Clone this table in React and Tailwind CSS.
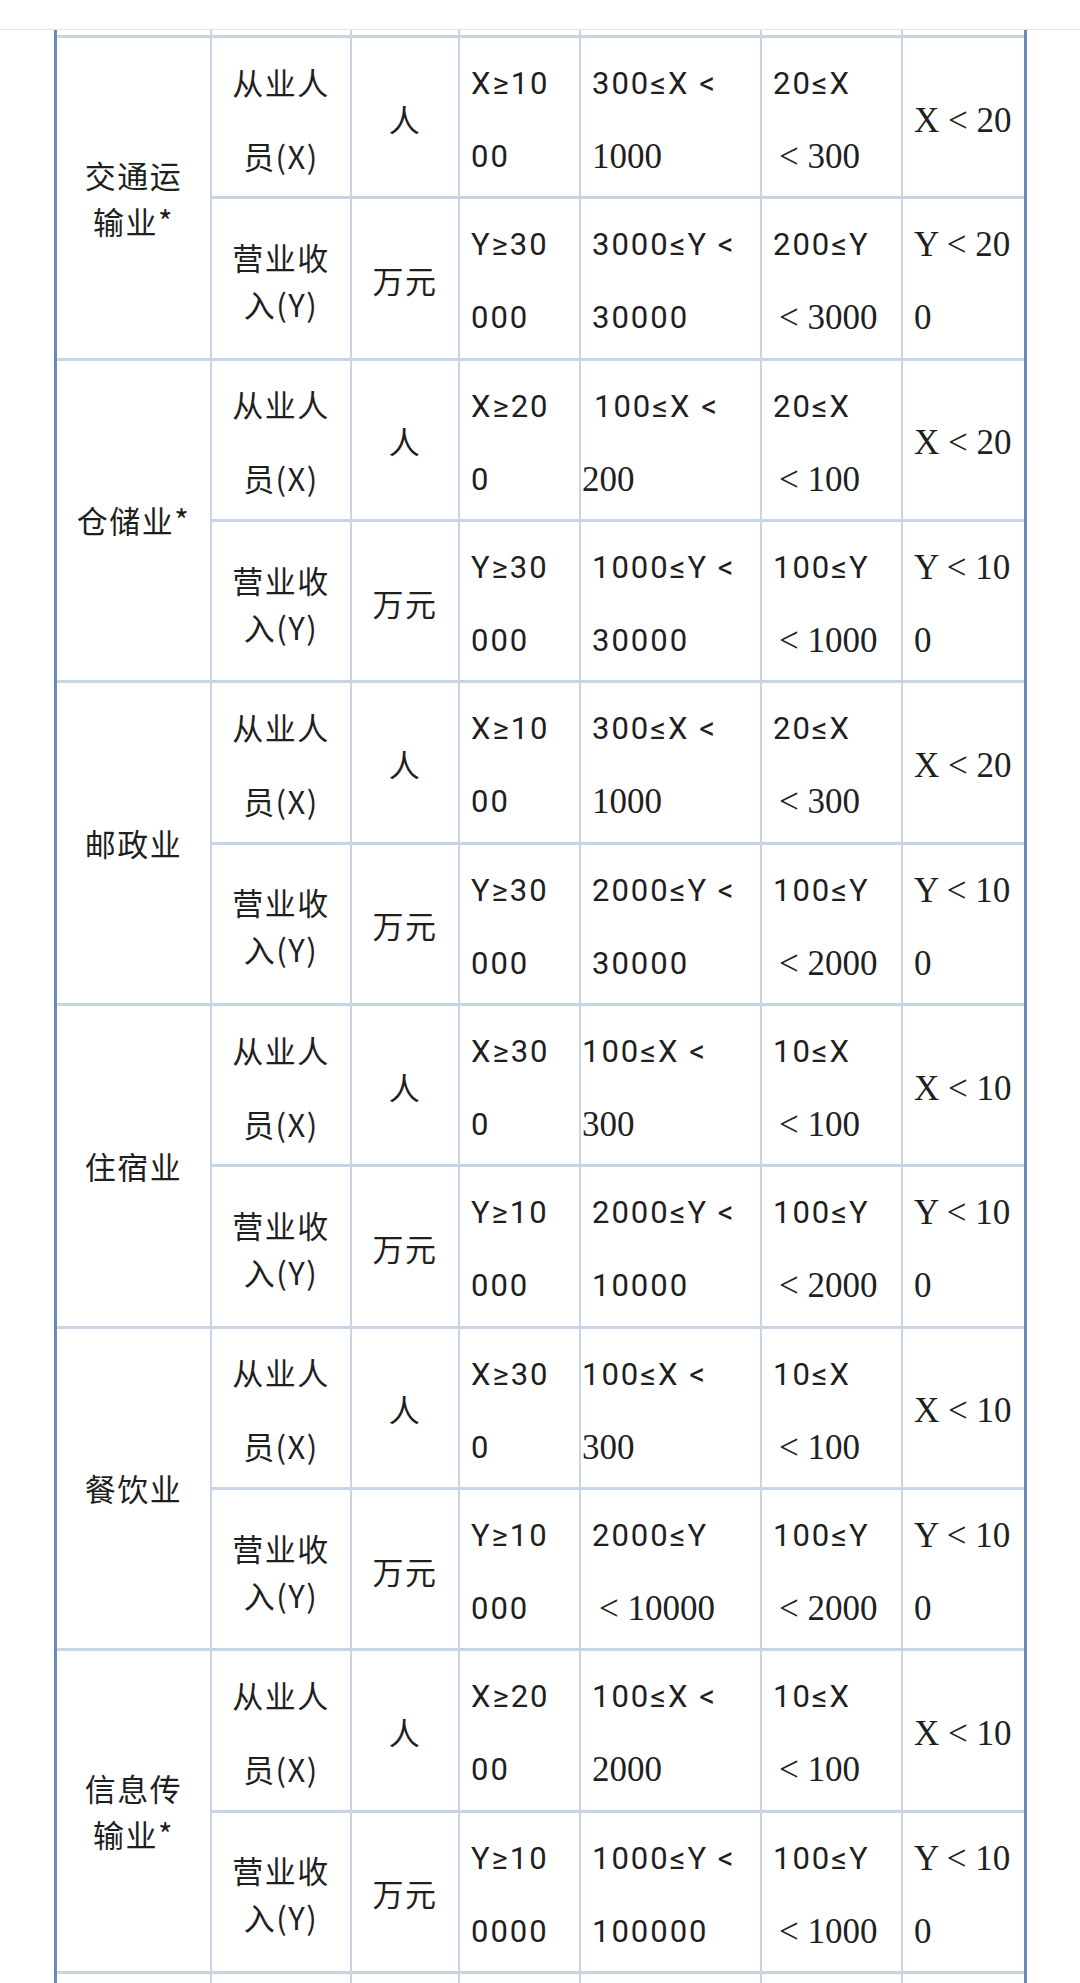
import React from 'react';

const SANS = "font-['Roboto',sans-serif] text-[31px] tracking-[2px]";
const SERIF = "font-['Liberation_Serif',serif] text-[35px]";
const CJK = "font-['Noto_Sans_CJK_SC',sans-serif] text-[31px] tracking-[1.5px]";

// left offsets of a text line inside a cell
const OFF = {
  d: 'pl-[11px]',
  t: 'pl-[1px]',
  m: 'pl-[13px]',
  l: 'pl-[17px]',
  k: 'pl-[18px]',
};

const LINE = 'border-[#c8d5e7]';

const blocks = [
  {
    name: ['交通运', '输业*'],
    x: [
      [['X≥10', 's'], ['00', 's']],
      [['300≤X <', 's'], ['1000', 'r']],
      [['20≤X', 's'], ['< 300', 'r', 'l']],
      [['X < 20', 'r']],
    ],
    y: [
      [['Y≥30', 's'], ['000', 's']],
      [['3000≤Y <', 's'], ['30000', 's']],
      [['200≤Y', 's'], ['< 3000', 'r', 'l']],
      [['Y < 20', 'r'], ['0', 'r']],
    ],
  },
  {
    name: ['仓储业*'],
    x: [
      [['X≥20', 's'], ['0', 's']],
      [['100≤X <', 's', 'm'], ['200', 'r', 't']],
      [['20≤X', 's'], ['< 100', 'r', 'l']],
      [['X < 20', 'r']],
    ],
    y: [
      [['Y≥30', 's'], ['000', 's']],
      [['1000≤Y <', 's'], ['30000', 's']],
      [['100≤Y', 's'], ['< 1000', 'r', 'l']],
      [['Y < 10', 'r'], ['0', 'r']],
    ],
  },
  {
    name: ['邮政业'],
    x: [
      [['X≥10', 's'], ['00', 's']],
      [['300≤X <', 's'], ['1000', 'r']],
      [['20≤X', 's'], ['< 300', 'r', 'l']],
      [['X < 20', 'r']],
    ],
    y: [
      [['Y≥30', 's'], ['000', 's']],
      [['2000≤Y <', 's'], ['30000', 's']],
      [['100≤Y', 's'], ['< 2000', 'r', 'l']],
      [['Y < 10', 'r'], ['0', 'r']],
    ],
  },
  {
    name: ['住宿业'],
    x: [
      [['X≥30', 's'], ['0', 's']],
      [['100≤X <', 's', 't'], ['300', 'r', 't']],
      [['10≤X', 's'], ['< 100', 'r', 'l']],
      [['X < 10', 'r']],
    ],
    y: [
      [['Y≥10', 's'], ['000', 's']],
      [['2000≤Y <', 's'], ['10000', 's']],
      [['100≤Y', 's'], ['< 2000', 'r', 'l']],
      [['Y < 10', 'r'], ['0', 'r']],
    ],
  },
  {
    name: ['餐饮业'],
    x: [
      [['X≥30', 's'], ['0', 's']],
      [['100≤X <', 's', 't'], ['300', 'r', 't']],
      [['10≤X', 's'], ['< 100', 'r', 'l']],
      [['X < 10', 'r']],
    ],
    y: [
      [['Y≥10', 's'], ['000', 's']],
      [['2000≤Y', 's'], ['< 10000', 'r', 'k']],
      [['100≤Y', 's'], ['< 2000', 'r', 'l']],
      [['Y < 10', 'r'], ['0', 'r']],
    ],
  },
  {
    name: ['信息传', '输业*'],
    x: [
      [['X≥20', 's'], ['00', 's']],
      [['100≤X <', 's'], ['2000', 'r']],
      [['10≤X', 's'], ['< 100', 'r', 'l']],
      [['X < 10', 'r']],
    ],
    y: [
      [['Y≥10', 's'], ['0000', 's']],
      [['1000≤Y <', 's'], ['100000', 's']],
      [['100≤Y', 's'], ['< 1000', 'r', 'l']],
      [['Y < 10', 'r'], ['0', 'r']],
    ],
  },
];

function NumCell({ lines }) {
  return (
    <div className={`flex flex-col justify-center border-t-[3px] border-l-2 ${LINE} pt-[6px] text-[#1f1f1f]`}>
      {lines.map(([t, f, o = 'd'], i) => (
        <div key={i} className={`whitespace-pre leading-[73px] ${f === 'r' ? SERIF : SANS} ${OFF[o]}`}>
          {t}
        </div>
      ))}
    </div>
  );
}

function LabelCell({ lines, leading }) {
  return (
    <div className={`flex flex-col items-center justify-center border-t-[3px] border-l-2 ${LINE} pt-[3px] text-[#1f1f1f] ${CJK} ${leading}`}>
      {lines.map((t) => (
        <div key={t} className="whitespace-nowrap">{t}</div>
      ))}
    </div>
  );
}

function Block({ block }) {
  return (
    <>
      <div className={`row-span-2 flex flex-col items-center justify-center border-t-[3px] ${LINE} text-[#1f1f1f] ${CJK} leading-[46px]`}>
        {block.name.map((t) => (
          <div key={t} className="whitespace-nowrap">{t}</div>
        ))}
      </div>
      {/* 从业人员 row */}
      <LabelCell lines={['从业人', '员(X)']} leading="leading-[74px]" />
      <LabelCell lines={['人']} leading="leading-[44px]" />
      {block.x.map((lines, i) => (
        <NumCell key={i} lines={lines} />
      ))}
      {/* 营业收入 row */}
      <LabelCell lines={['营业收', '入(Y)']} leading="leading-[47px]" />
      <LabelCell lines={['万元']} leading="leading-[44px]" />
      {block.y.map((lines, i) => (
        <NumCell key={i} lines={lines} />
      ))}
    </>
  );
}

const App = () => {
  const cols = [0, 1, 2, 3, 4, 5, 6];

  return (
    <div className="h-[1983px] overflow-hidden bg-white">
      {/* top bar */}
      <div className="h-[30px] border-b border-[#e3e3e3] bg-white" />

      <div className="ml-[54px] grid w-[973px] grid-cols-[153px_140px_108px_121px_181px_141px_123px] grid-rows-[5px_repeat(12,161.33px)_20px] border-x-[3px] border-[#6b8ab6]">
        {/* tail of the row above */}
        {cols.map((c) => (
          <div key={`top-${c}`} className={c === 0 ? '' : `border-l-2 ${LINE}`} />
        ))}

        {blocks.map((b) => (
          <Block key={b.name.join('')} block={b} />
        ))}

        {/* start of the next row */}
        {cols.map((c) => (
          <div key={`bot-${c}`} className={`border-t-[3px] ${LINE} ${c === 0 ? '' : 'border-l-2'}`} />
        ))}
      </div>
    </div>
  );
};

export default App;
